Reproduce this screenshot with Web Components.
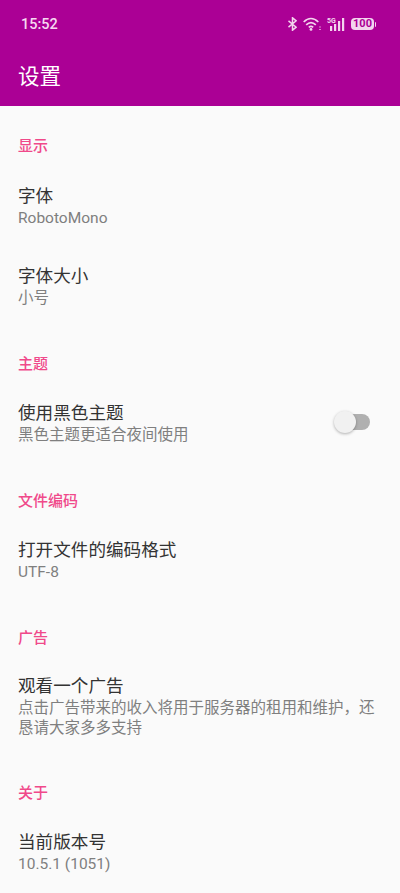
<!DOCTYPE html>
<html lang="zh">
<head>
<meta charset="utf-8">
<style>
html, body { margin: 0; padding: 0; background: #fafafa; }
body { width: 400px; height: 893px; overflow: hidden; font-family: Roboto, "Noto Sans CJK SC", sans-serif; }
</style>
</head>
<body>
<settings-appbar title="设置"></settings-appbar>
<settings-list>
  <pref-category label="显示" first></pref-category>
  <pref-row title="字体" summary="RobotoMono"></pref-row>
  <pref-row title="字体大小" summary="小号"></pref-row>
  <pref-category label="主题"></pref-category>
  <pref-row title="使用黑色主题" summary="黑色主题更适合夜间使用"><pref-switch slot="end"></pref-switch></pref-row>
  <pref-category label="文件编码"></pref-category>
  <pref-row title="打开文件的编码格式" summary="UTF-8"></pref-row>
  <pref-category label="广告"></pref-category>
  <pref-row title="观看一个广告" summary="点击广告带来的收入将用于服务器的租用和维护，还恳请大家多多支持"></pref-row>
  <pref-category label="关于"></pref-category>
  <pref-row title="当前版本号" summary="10.5.1 (1051)"></pref-row>
</settings-list>
<script>
class SettingsAppbar extends HTMLElement {
    connectedCallback() {
        const shadow = this.attachShadow({ mode: "open" });
        shadow.innerHTML = `
        <style>
            :host { display: block; height: 106px; background: #ab0095; color: #fff; box-sizing: border-box; padding: 0 25px 0 21px; }
            .status { height: 48px; display: flex; align-items: center; justify-content: space-between; }
            .time { font: 500 14.5px Roboto, sans-serif; color: #f6d9f1; }
            .icons { display: flex; align-items: center; gap: 6px; }
            svg { display: block; }
            h1 { margin: 0 0 0 -3px; font: 400 21.5px/54px "Noto Sans CJK SC", sans-serif; }
            .batt { position: relative; width: 23px; height: 12px; background: #f3d5ee; border-radius: 4px; color: #ab0095; font: 700 11px/12px Roboto, sans-serif; text-align: center; margin-right: 1px; }
            .batt::after { content: ""; position: absolute; right: -2px; top: 3.5px; width: 1.5px; height: 5px; background: #f3d5ee; border-radius: 0 1px 1px 0; }
        </style>
        <div class="status">
            <span class="time">15:52</span>
            <span class="icons">
                <svg width="9" height="14" viewBox="0 0 9 14" fill="none" stroke="#f3d5ee" stroke-width="1.500"><path d="M.5 3.800l7.700 6.400-3.700 3V.8l3.700 3-7.700 6.400"/></svg>
                <svg width="18" height="14" viewBox="0 0 18 14" fill="none" stroke="#f3d5ee" stroke-width="1.700"><path d="M.7 5c4.500-4.400 10-4.400 14.600 0"/><path d="M3.200 7.800c3-2.800 6.600-2.800 9.600 0"/><path d="M5.800 10.300c1.400-1.100 3-1.100 4.400 0"/><circle cx="8" cy="12.400" r="1.400" fill="#f3d5ee" stroke="none"/><path d="M17 9.500v1M17 12v1" stroke-width="1.300"/></svg>
                <svg width="18" height="14" viewBox="0 0 18 14"><text x="0" y="5.500" font-size="7" font-weight="700" font-family="Roboto" fill="#f3d5ee">5G</text><g fill="#f3d5ee"><rect x="3" y="9" width="2.200" height="5"/><rect x="7" y="7" width="2.200" height="7"/><rect x="11" y="4" width="2.200" height="10"/><rect x="15" y="1" width="2.200" height="13"/></g></svg>
                <span class="batt">100</span>
            </span>
        </div>
        <h1>${this.getAttribute("title")}</h1>
     `;
    }
}
customElements.define("settings-appbar", SettingsAppbar);

class SettingsList extends HTMLElement {
    connectedCallback() {
        const shadow = this.attachShadow({ mode: "open" });
        shadow.innerHTML = `
        <style>
            :host { display: flex; flex-direction: column; }
        </style>
        <slot></slot>
     `;
    }
}
customElements.define("settings-list", SettingsList);

class PrefCategory extends HTMLElement {
    connectedCallback() {
        const shadow = this.attachShadow({ mode: "open" });
        shadow.innerHTML = `
        <style>
            :host { display: block; padding: 26px 18px 0; height: 57px; box-sizing: border-box; color: #f0498a; font: 500 15px/22px "Noto Sans CJK SC", sans-serif; }
            :host([first]) { padding-top: 28px; height: 60px; }
        </style>
        ${this.getAttribute("label")}
     `;
    }
}
customElements.define("pref-category", PrefCategory);

class PrefRow extends HTMLElement {
    connectedCallback() {
        const shadow = this.attachShadow({ mode: "open" });
        shadow.innerHTML = `
        <style>
            :host { display: flex; align-items: center; min-height: 80px; box-sizing: border-box; padding: 17px 12px 17px 18px; gap: 12px; }
            .text { flex: 1; min-width: 0; }
            .title { font: 400 17.600px/21px "Noto Sans CJK SC", sans-serif; color: #333; margin-bottom: 3px; }
            .summary { font: 400 15.500px/20px Roboto, "Noto Sans CJK SC", sans-serif; color: #7f7f7f; }
        </style>
        <div class="text">
            <div class="title">${this.getAttribute("title")}</div>
            <div class="summary">${this.getAttribute("summary")}</div>
        </div>
        <slot name="end"></slot>
     `;
    }
}
customElements.define("pref-row", PrefRow);

class PrefSwitch extends HTMLElement {
    connectedCallback() {
        const shadow = this.attachShadow({ mode: "open" });
        shadow.innerHTML = `
        <style>
            :host { display: block; position: relative; width: 36px; height: 24px; margin: -3px 18px 0 0; }
            .track { position: absolute; left: 2px; right: 0; top: 4px; height: 16px; border-radius: 8px; background: #b0b0b0; }
            .thumb { position: absolute; left: 0; top: 1px; width: 22px; height: 22px; border-radius: 50%; background: #f1f1f1; box-shadow: 0 1px 3px rgba(0,0,0,.3); }
        </style>
        <div class="track"></div>
        <div class="thumb"></div>
     `;
    }
}
customElements.define("pref-switch", PrefSwitch);
</script>
</body>
</html>
